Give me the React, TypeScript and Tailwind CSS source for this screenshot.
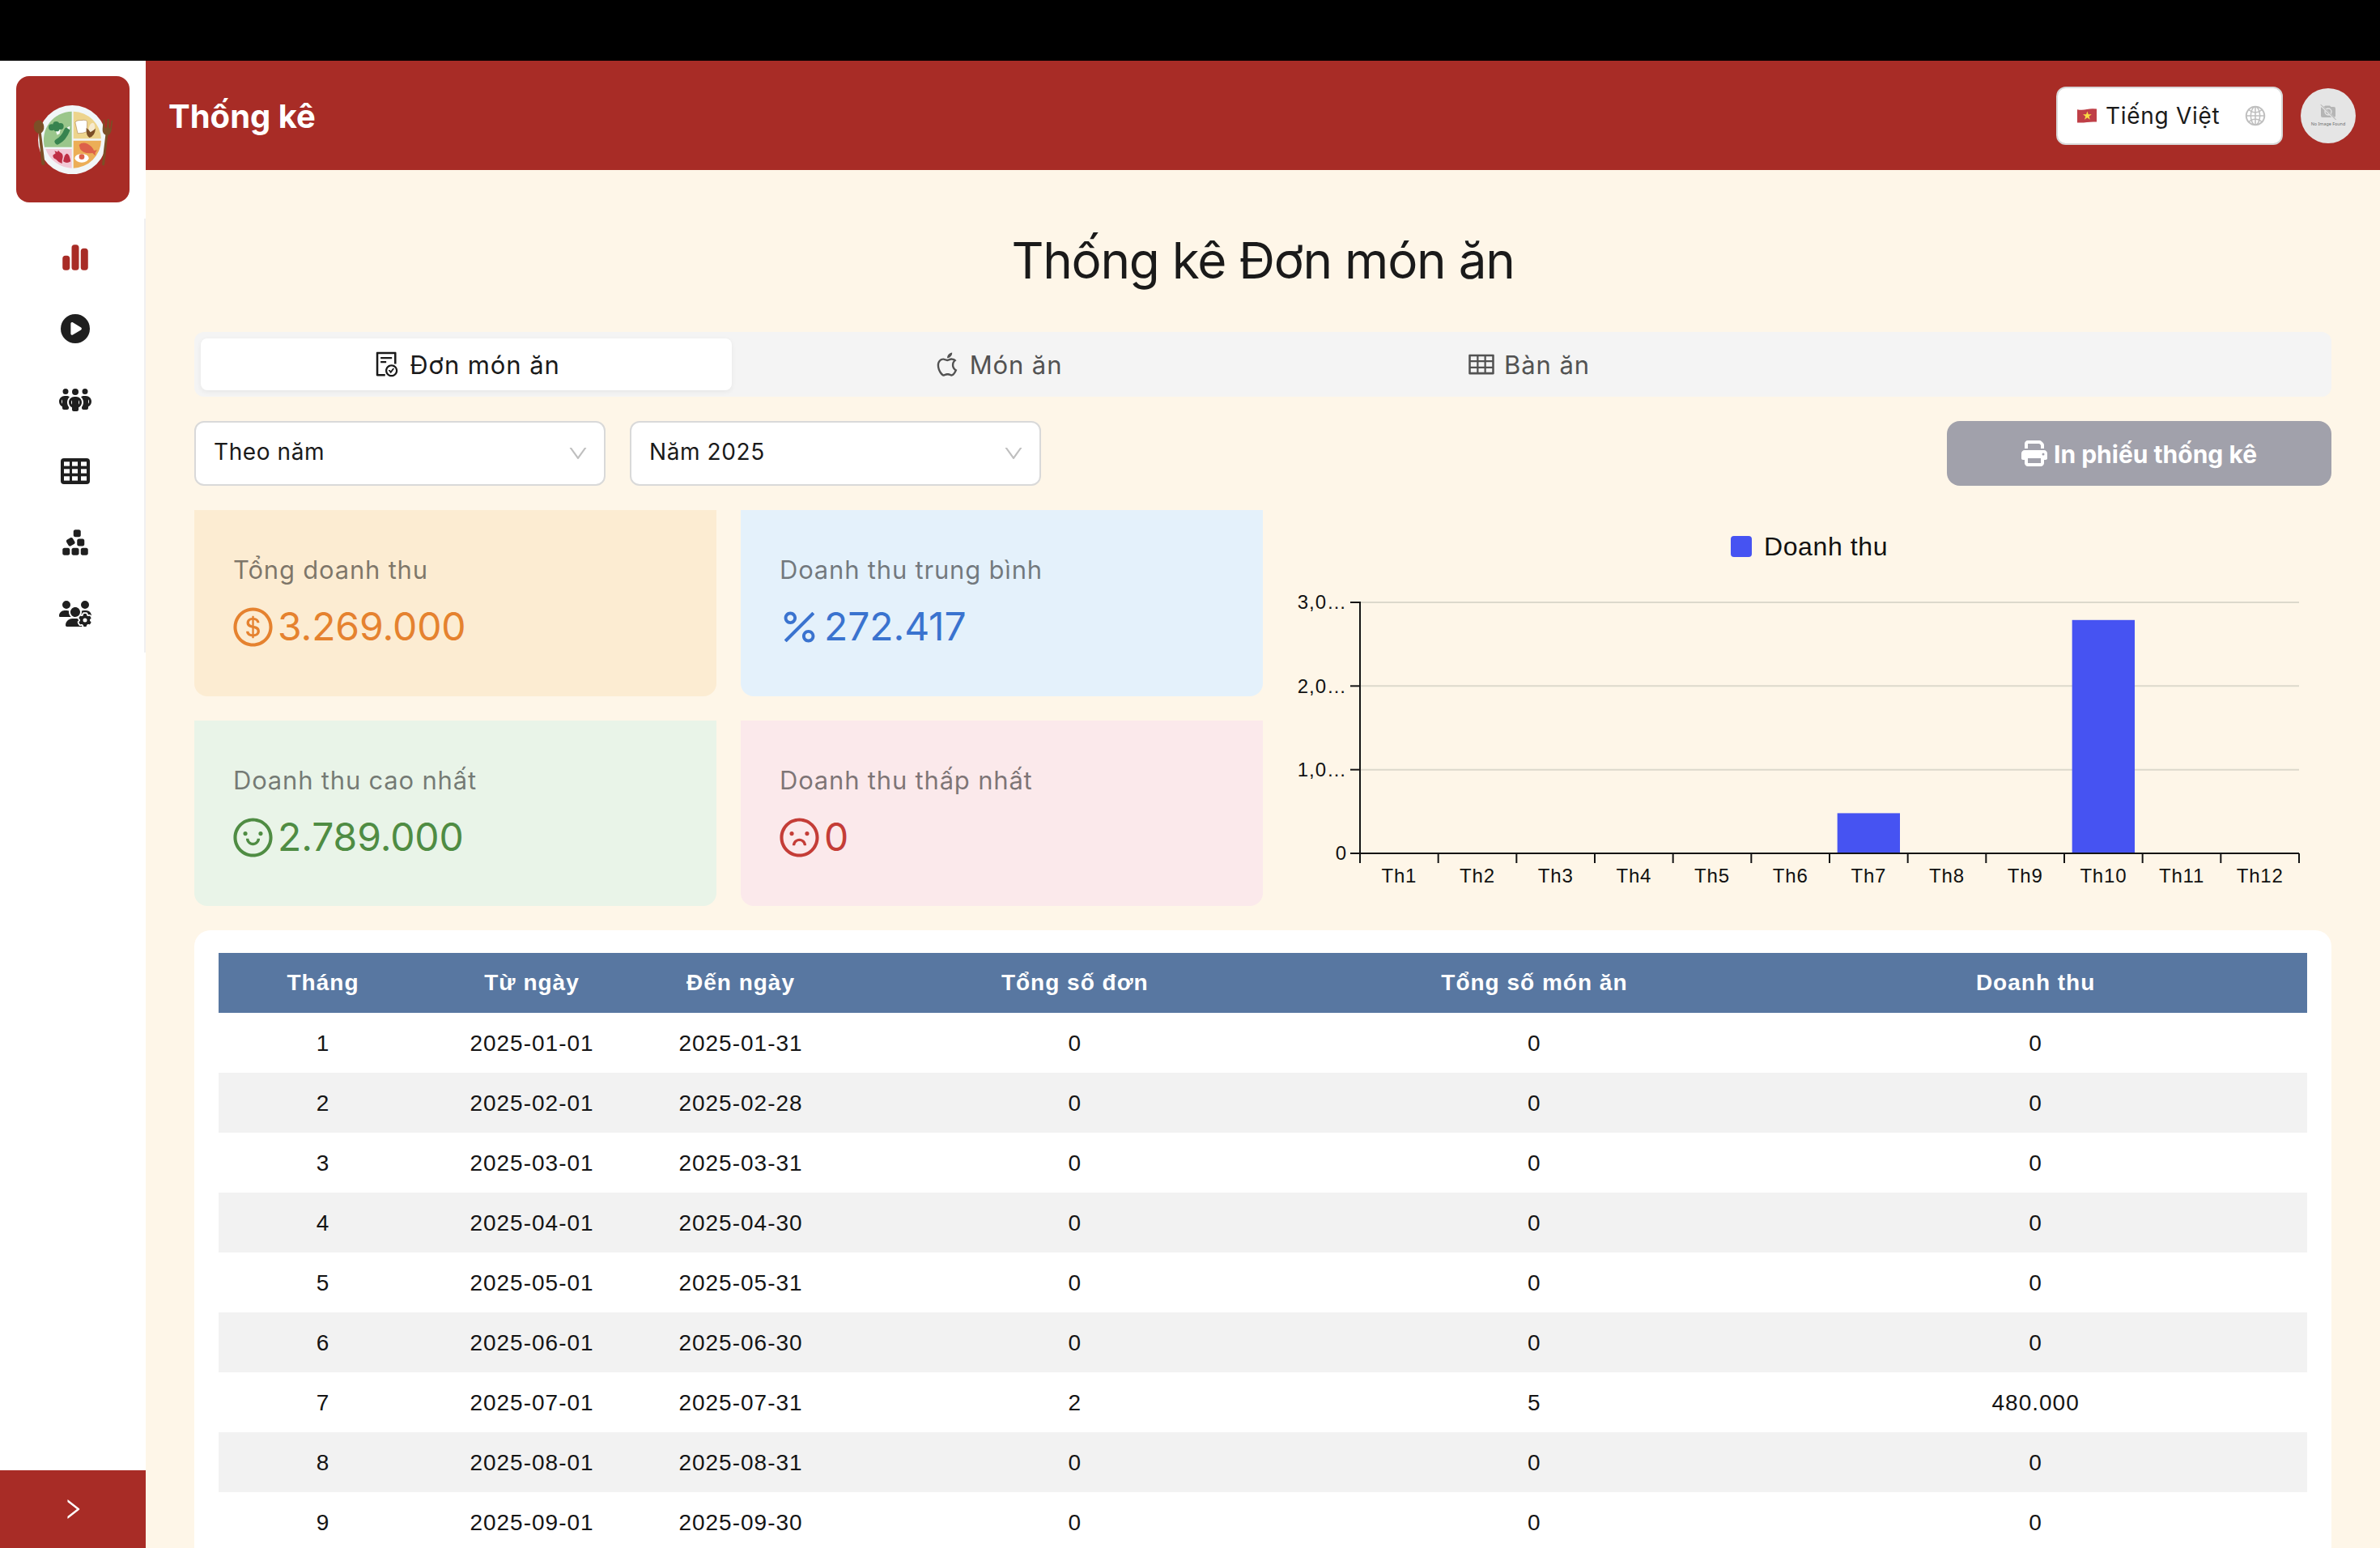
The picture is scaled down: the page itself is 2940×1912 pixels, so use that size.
import type { ReactNode } from 'react';
import {
  AiOutlineApple,
  AiOutlineDollarCircle,
  AiOutlineDown,
  AiOutlineFileDone,
  AiOutlineFrown,
  AiOutlineGlobal,
  AiOutlinePercentage,
  AiOutlineRight,
  AiOutlineSmile,
  AiOutlineTable,
} from 'react-icons/ai';
import {
  FaChartSimple,
  FaCirclePlay,
  FaCubesStacked,
  FaPeopleGroup,
  FaPrint,
  FaUsersGear,
} from 'react-icons/fa6';

type Row = { from: string; to: string; orders: string; dishes: string; revenue: string };

const rows: Row[] = [
  { from: '2025-01-01', to: '2025-01-31', orders: '0', dishes: '0', revenue: '0' },
  { from: '2025-02-01', to: '2025-02-28', orders: '0', dishes: '0', revenue: '0' },
  { from: '2025-03-01', to: '2025-03-31', orders: '0', dishes: '0', revenue: '0' },
  { from: '2025-04-01', to: '2025-04-30', orders: '0', dishes: '0', revenue: '0' },
  { from: '2025-05-01', to: '2025-05-31', orders: '0', dishes: '0', revenue: '0' },
  { from: '2025-06-01', to: '2025-06-30', orders: '0', dishes: '0', revenue: '0' },
  { from: '2025-07-01', to: '2025-07-31', orders: '2', dishes: '5', revenue: '480.000' },
  { from: '2025-08-01', to: '2025-08-31', orders: '0', dishes: '0', revenue: '0' },
  { from: '2025-09-01', to: '2025-09-30', orders: '0', dishes: '0', revenue: '0' },
];

const revenueByMonth = [0, 0, 0, 0, 0, 0, 480000, 0, 0, 2789000, 0, 0];

function PlateLogo() {
  return (
    <svg viewBox="120 205 300 260" className="h-[86.67px] w-[100px]">
      <ellipse cx="268" cy="336" rx="127" ry="128" fill="#f1f6f8" />
      <path d="M266 231 A106 106 0 0 0 165 363 H266 Z" fill="#9ac68b" />
      <path d="M272 231 A106 106 0 0 1 375 332 H272 Z" fill="#edd48d" />
      <path d="M169 370 H266 V441 A106 106 0 0 1 169 370 Z" fill="#f2c9d6" />
      <path d="M272 339 H375 A106 106 0 0 1 272 441 Z" fill="#ecae57" />
      <path d="M205 300 L212 318 L221 313 L224 296 Z" fill="#f6faf5" />
      <g fill="#37834f">
        <circle cx="192" cy="290" r="12" />
        <circle cx="208" cy="280" r="12" />
        <circle cx="224" cy="286" r="12" />
        <circle cx="210" cy="294" r="11" />
      </g>
      <path d="M248 301 Q236 331 213 343" fill="none" stroke="#37834f" strokeWidth="21" strokeLinecap="round" />
      <path d="M247 291 L259 285 L258 299 Z" fill="#f6faf5" />
      <path d="M279 272 Q282 263 300 264 Q322 260 323 270 L322 306 Q306 313 288 312 Z" fill="#fff" stroke="#9a6b3a" strokeWidth="1.5" />
      <ellipse cx="340" cy="294" rx="11" ry="21" fill="#f6ead0" transform="rotate(12 340 294)" />
      <path d="M320 292 Q318 320 331 328 Q352 322 354 294 Q345 302 335 308 Q328 296 320 292 Z" fill="#7b4f27" />
      <path d="M293 355 Q305 343 325 351 Q342 360 348 376 L360 374 L353 384 L353 395 L343 385 Q310 390 297 370 Z" fill="#dd6149" />
      <ellipse cx="303" cy="404" rx="26" ry="16" fill="#fff" />
      <circle cx="303" cy="399" r="10" fill="#dd6149" />
      <path d="M196 393 L206 386 L202 377 L213 381 L216 375 L222 382 Q234 387 233 400 Q229 412 230 424 Q214 417 207 408 Q196 405 196 393 Z" fill="#be2f45" />
      <path d="M234 416 Q239 388 248 387 Q257 388 262 416 Q248 426 234 416 Z" fill="#be2f45" />
      <g fill="#7b4f27">
        <ellipse cx="144" cy="288" rx="19" ry="25" transform="rotate(-8 144 288)" />
        <path d="M143 308 L152 306 L167 426 Q160 434 154 427 Z" />
        <path d="M378 428 L391 318 Q379 313 380 296 L383 261 L388 261 L388 290 L395 292 L398 259 L405 259 L404 292 L409 293 L413 264 L418 264 L413 300 Q410 316 400 319 L387 429 Q382 434 378 428 Z" />
      </g>
    </svg>
  );
}

function GridIcon() {
  const xs = [4, 14, 25];
  const ys = [4.3, 13.3, 22.3];
  return (
    <svg viewBox="0 0 36 32" className="h-[32px] w-[36px]">
      <rect width="36" height="32" rx="4" fill="#1f1f1f" />
      {xs.map((x) => ys.map((y) => <rect key={`${x}-${y}`} x={x} y={y} width="7" height="5.3" fill="#fff" />))}
    </svg>
  );
}

function NavItem({ children }: { children: ReactNode }) {
  return <div className="flex h-[88px] items-center justify-center text-[#1f1f1f]">{children}</div>;
}

function Sidebar() {
  return (
    <aside className="flex w-[180px] shrink-0 flex-col bg-white">
      <div className="flex h-[195px] justify-center pt-[19px]">
        <div className="flex h-[156px] w-[140px] items-center justify-center rounded-[16px] bg-[#a82c26]">
          <PlateLogo />
        </div>
      </div>
      <nav className="h-[536px] border-r-2 border-[#f0f0f0] pt-[4px] pl-[8px]">
        <NavItem>
          <FaChartSimple className="h-[36px] w-[36px] text-[#a82c26]" />
        </NavItem>
        <NavItem>
          <FaCirclePlay className="h-[36px] w-[36px]" />
        </NavItem>
        <NavItem>
          <FaPeopleGroup className="h-[32px] w-[40px]" />
        </NavItem>
        <NavItem>
          <GridIcon />
        </NavItem>
        <NavItem>
          <FaCubesStacked className="h-[36px] w-[36px]" />
        </NavItem>
        <NavItem>
          <FaUsersGear className="h-[32px] w-[40px]" />
        </NavItem>
      </nav>
      <button className="mt-auto flex h-[96px] items-center justify-center bg-[#a82c26] text-white">
        <AiOutlineRight className="h-[32px] w-[32px]" />
      </button>
    </aside>
  );
}

function Flag() {
  return (
    <svg viewBox="0 0 24 18" className="h-[18px] w-[24px]">
      <path d="M0 1.2 Q6 2.4 12 1 T24 .6 V16.6 Q18 16.2 12 17 T0 17.4 Z" fill="#bf3f47" />
      <path d="M12.4 3.4 L13.7 7.2 L17.8 7.2 L14.5 9.7 L15.8 13.7 L12.4 11.3 L9 13.7 L10.2 9.7 L7 7.2 L11.1 7.2 Z" fill="#fbdc45" />
    </svg>
  );
}

function Avatar() {
  return (
    <div className="flex h-[68px] w-[68px] flex-col items-center rounded-full bg-[#e5e5e5] pt-[20px]">
      <svg viewBox="0 0 20 20" className="h-[20px] w-[20px]">
        <path d="M1 4.5 Q1 2.5 3 2.5 H5 L6.5 1.5 H12 L13.5 3 H17 Q19 3 19 5 V14 Q19 16 17 16 H3 Q1 16 1 14 Z" fill="#b5b5b5" />
        <circle cx="10" cy="9" r="4" fill="none" stroke="#e5e5e5" strokeWidth="1.4" />
        <path d="M.5 .5 L19.5 19.5" stroke="#e5e5e5" strokeWidth="2.6" />
        <path d="M.8 .2 L19.5 18.9" stroke="#a5a5a5" strokeWidth="1" />
      </svg>
      <span className="font-['Noto_Sans'] text-[5.4px] leading-[8px] whitespace-nowrap text-[#6d6d6d]">No Image Found</span>
    </div>
  );
}

function Header() {
  return (
    <header className="flex h-[135px] shrink-0 items-center bg-[#a82c26] pr-[30px] pl-[28px]">
      <h1 className="pt-[2px] text-[40px] leading-[40px] font-bold text-white">Thống kê</h1>
      <div className="ml-auto flex h-[72px] w-[280px] items-center rounded-[12px] border-2 border-[#d9d9d9] bg-white pr-[18px] pl-[24px]">
        <Flag />
        <span className="ml-[11px] text-[28px] leading-[32px] tracking-[0.7px] whitespace-nowrap text-[#1a1a1a]">Tiếng Việt</span>
        <AiOutlineGlobal className="ml-auto h-[28px] w-[28px] text-[#bfbfbf]" />
      </div>
      <div className="ml-[22px]">
        <Avatar />
      </div>
    </header>
  );
}

function Tab({ icon, label, active }: { icon: ReactNode; label: string; active?: boolean }) {
  return (
    <div
      className={
        active
          ? 'flex h-[64px] w-[656px] items-center justify-center gap-[10px] rounded-[8px] bg-white text-[#1a1a1a] shadow-[0_2px_6px_rgba(0,0,0,0.06)]'
          : 'flex h-[64px] w-[656px] items-center justify-center gap-[10px] rounded-[8px] text-[#525252]'
      }
    >
      {icon}
      <span className="pt-[1px] text-[31px] leading-[40px] tracking-[0.9px] whitespace-nowrap">{label}</span>
    </div>
  );
}

function Select({ value }: { value: string }) {
  return (
    <div className="flex h-[80px] w-[508px] items-center rounded-[12px] border-2 border-[#d9d9d9] bg-white pr-[18px] pl-[22px]">
      <span className="-mt-[4px] text-[28px] leading-[40px] tracking-[0.6px] whitespace-nowrap text-[#1a1a1a]">{value}</span>
      <AiOutlineDown className="ml-auto h-[28px] w-[28px] text-[#bfbfbf]" />
    </div>
  );
}

function StatCard({ title, value, icon, tone }: { title: string; value: string; icon: ReactNode; tone: string }) {
  return (
    <div className={`rounded-b-[16px] pt-[54px] pl-[48px] ${tone}`}>
      <div className="text-[31px] leading-[40px] tracking-[0.8px] text-[#000000]/50">{title}</div>
      <div className="mt-[20px] flex h-[60px] items-center">
        <span className="-ml-[3px]">{icon}</span>
        <span className="ml-[3px] text-[48px] leading-[60px] tracking-[-0.1px]">{value}</span>
      </div>
    </div>
  );
}

function RevenueChart() {
  const left = 120;
  const right = 1280;
  const top = 114;
  const bottom = 424;
  const band = (right - left) / 12;
  const ticks = [
    { value: 3000000, label: '3,0…' },
    { value: 2000000, label: '2,0…' },
    { value: 1000000, label: '1,0…' },
    { value: 0, label: '0' },
  ];
  const yOf = (value: number) => bottom - (value / 3000000) * (bottom - top);
  return (
    <svg viewBox="0 0 1320 489" className="h-[489px] w-[1320px] font-['Liberation_Sans',sans-serif]">
      <rect x="578" y="32" width="26" height="26" rx="4" fill="#4653f2" />
      <text x="619" y="56" fontSize="32" letterSpacing="0.6" fill="#111">Doanh thu</text>
      {ticks.slice(0, 3).map((t) => (
        <line key={t.label} x1={left} x2={right} y1={yOf(t.value)} y2={yOf(t.value)} stroke="#dcd9cc" strokeWidth="2" />
      ))}
      {revenueByMonth.map((value, i) => (
        <rect key={i} x={left + band * (i + 0.1)} y={yOf(value)} width={band * 0.8} height={bottom - yOf(value)} fill="#4653f2" />
      ))}
      {ticks.map((t) => (
        <g key={t.label}>
          <line x1={left - 12} x2={left} y1={yOf(t.value)} y2={yOf(t.value)} stroke="#141414" strokeWidth="2" />
          <text x="104" y={yOf(t.value) + 8.3} fontSize="24" letterSpacing="1" textAnchor="end" fill="#111">{t.label}</text>
        </g>
      ))}
      <line x1={left} x2={left} y1={top - 1} y2={bottom} stroke="#141414" strokeWidth="2" />
      <line x1={left} x2={right} y1={bottom} y2={bottom} stroke="#141414" strokeWidth="2" />
      {Array.from({ length: 13 }, (_, i) => (
        <line key={i} x1={left + band * i} x2={left + band * i} y1={bottom} y2={bottom + 12} stroke="#141414" strokeWidth="2" />
      ))}
      {revenueByMonth.map((_, i) => (
        <text key={i} x={left + band * (i + 0.5)} y="460" fontSize="24" letterSpacing="0.8" textAnchor="middle" fill="#111">{`Th${i + 1}`}</text>
      ))}
    </svg>
  );
}

function MonthTable() {
  return (
    <div className="mt-[30px] h-[900px] rounded-[20px] bg-white px-[30px] pt-[28px]">
      <table className="w-full table-fixed border-collapse text-center font-['Liberation_Sans',sans-serif] text-[28px] leading-[34px] tracking-[1px] text-[#141414]">
        <colgroup>
          <col className="w-[10%]" />
          <col className="w-[10%]" />
          <col className="w-[10%]" />
          <col className="w-[22%]" />
          <col className="w-[22%]" />
          <col className="w-[26%]" />
        </colgroup>
        <thead>
          <tr className="h-[74px] bg-[#5877a1] text-white">
            <th>Tháng</th>
            <th>Từ ngày</th>
            <th>Đến ngày</th>
            <th>Tổng số đơn</th>
            <th>Tổng số món ăn</th>
            <th>Doanh thu</th>
          </tr>
        </thead>
        <tbody>
          {rows.map((row, i) => (
            <tr key={row.from} className="h-[74px] even:bg-[#f2f2f2] [&>td]:pt-[2px]">
              <td>{i + 1}</td>
              <td>{row.from}</td>
              <td>{row.to}</td>
              <td>{row.orders}</td>
              <td>{row.dishes}</td>
              <td>{row.revenue}</td>
            </tr>
          ))}
        </tbody>
      </table>
    </div>
  );
}

export default function App() {
  return (
    <div className="flex h-[1912px] w-[2940px] flex-col overflow-hidden bg-[#fef6e8] font-['Inter',sans-serif]">
      <div className="h-[75px] shrink-0 bg-black" />
      <div className="flex h-[1837px]">
        <Sidebar />
        <div className="flex min-w-0 flex-1 flex-col">
          <Header />
          <main className="px-[60px]">
            <h2 className="flex h-[200px] items-center justify-center pt-[24px] text-[62px] leading-[80px] tracking-[-1.25px] text-[#1a1a1a]">Thống kê Đơn món ăn</h2>
            <div className="flex h-[80px] items-center rounded-[12px] bg-[#f4f4f4] px-[8px]">
              <Tab active icon={<AiOutlineFileDone className="h-[36px] w-[36px]" />} label="Đơn món ăn" />
              <Tab icon={<AiOutlineApple className="h-[36px] w-[36px]" />} label="Món ăn" />
              <Tab icon={<AiOutlineTable className="h-[36px] w-[36px]" />} label="Bàn ăn" />
            </div>
            <div className="mt-[30px] flex items-center gap-[30px]">
              <Select value="Theo năm" />
              <Select value="Năm 2025" />
              <button className="ml-auto flex h-[80px] w-[475px] items-center justify-center gap-[8px] rounded-[16px] bg-[#a1a1ab] text-[30px] font-bold text-white">
                <FaPrint className="h-[32px] w-[32px]" />
                <span className="pt-[2px] leading-[40px] whitespace-nowrap">In phiếu thống kê</span>
              </button>
            </div>
            <div className="mt-[30px] flex">
              <div className="grid h-[489px] w-[1320px] grid-cols-2 grid-rows-[230px_229px] gap-[30px]">
                <StatCard title="Tổng doanh thu" value="3.269.000" tone="bg-[#fcecd2] text-[#e5822f]" icon={<AiOutlineDollarCircle className="h-[55px] w-[55px]" />} />
                <StatCard title="Doanh thu trung bình" value="272.417" tone="bg-[#e4f1fb] text-[#3a73cf]" icon={<AiOutlinePercentage className="h-[55px] w-[55px]" />} />
                <StatCard title="Doanh thu cao nhất" value="2.789.000" tone="bg-[#e9f4e8] text-[#4f8c43]" icon={<AiOutlineSmile className="h-[55px] w-[55px]" />} />
                <StatCard title="Doanh thu thấp nhất" value="0" tone="bg-[#fbe9eb] text-[#c43d37]" icon={<AiOutlineFrown className="h-[55px] w-[55px]" />} />
              </div>
              <RevenueChart />
            </div>
            <MonthTable />
          </main>
        </div>
      </div>
    </div>
  );
}
